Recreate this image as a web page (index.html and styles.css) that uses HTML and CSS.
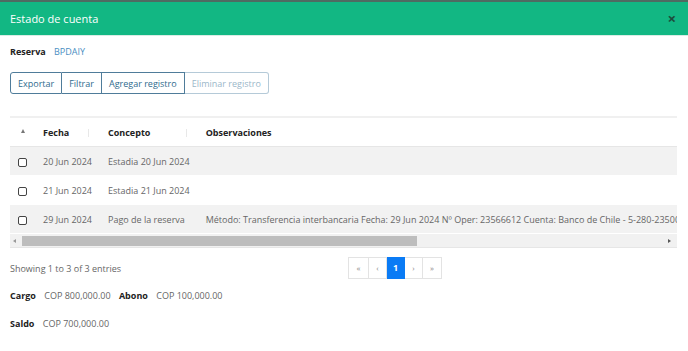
FILE: index.html
```html
<!DOCTYPE html>
<html lang="es">
<head>
    <meta charset="UTF-8">
    <meta name="viewport" content="width=device-width, initial-scale=1.0">
    <title>Estado de cuenta</title>
    <link rel="stylesheet" href="styles.css">
</head>
<body>
<div class="modal">
    <header class="modal-head">
        <h1>Estado de cuenta</h1>
        <span class="close">&times;</span>
    </header>

    <div class="modal-body">
        <p class="reserva"><b>Reserva</b> <a href="#">BPDAIY</a></p>

        <div class="btns">
            <button>Exportar</button>
            <button>Filtrar</button>
            <button>Agregar registro</button>
            <button class="off">Eliminar registro</button>
        </div>

        <div class="grid">
            <div class="grid-in">
                <table>
                    <thead>
                        <tr>
                            <th class="c-chk"><span class="up"></span></th>
                            <th class="c-fecha">Fecha <span class="sort"></span></th>
                            <th class="c-con">Concepto <span class="sort"></span></th>
                            <th>Observaciones</th>
                        </tr>
                    </thead>
                    <tbody>
                        <tr class="odd">
                            <td class="c-chk"><i class="chk"></i></td>
                            <td>20 Jun 2024</td>
                            <td>Estadia 20 Jun 2024</td>
                            <td></td>
                        </tr>
                        <tr>
                            <td class="c-chk"><i class="chk"></i></td>
                            <td>21 Jun 2024</td>
                            <td>Estadia 21 Jun 2024</td>
                            <td></td>
                        </tr>
                        <tr class="odd">
                            <td class="c-chk"><i class="chk"></i></td>
                            <td>29 Jun 2024</td>
                            <td>Pago de la reserva</td>
                            <td>Método: Transferencia interbancaria Fecha: 29 Jun 2024 Nº Oper: 23566612 Cuenta: Banco de Chile - 5-280-23500-08</td>
                        </tr>
                    </tbody>
                </table>
            </div>
            <div class="scroll">
                <span class="arr l"></span>
                <span class="thumb"></span>
                <span class="arr r"></span>
            </div>
        </div>

        <div class="info">
            <span class="count">Showing 1 to 3 of 3 entries</span>
            <ul class="pager">
                <li>&laquo;</li>
                <li>&lsaquo;</li>
                <li class="on">1</li>
                <li>&rsaquo;</li>
                <li>&raquo;</li>
            </ul>
        </div>

        <p class="tot"><b>Cargo</b> <span>COP 800,000.00</span> <b>Abono</b> <span>COP 100,000.00</span></p>
        <p class="tot"><b>Saldo</b> <span>COP 700,000.00</span></p>
    </div>
</div>
</body>
</html>
```

FILE: styles.css
```css
body {margin: 0; font-family: "Open Sans", "Noto Sans", sans-serif; font-size: 9px; color: #666; background: #fff;}
.modal {border-top: 2px solid #4f6b62;}

.modal-head {display: flex; align-items: center; justify-content: space-between; height: 33px; padding: 0 10px; background: #12b783; border-bottom: 1px solid #d9ece5;}
.modal-head h1 {margin: 0; font-size: 11px; font-weight: normal; color: #fff;}
.close {font-size: 15px; font-weight: bold; color: #1d4d3d; line-height: 1; padding-right: 2px;}

.modal-body {padding: 0 11px 0 10px;}
.reserva {margin: 10px 0 0; line-height: 12px; font-size: 9px;}
.reserva b {color: #222; margin-right: 6px;}
.reserva a {color: #4a8ec2; text-decoration: none;}

.btns {display: flex; margin-top: 14px;}
.btns button {height: 22px; padding: 0 7px; font: inherit; font-size: 9px; color: #2f6b8e; background: #fff; border: 1px solid #4f7c9a; border-left: 0;}
.btns button:first-child {border-left: 1px solid #4f7c9a; border-radius: 3px 0 0 3px;}
.btns button:last-child {border-radius: 0 3px 3px 0;}
.btns button.off {color: #9bb7c9; border-color: #b5cad8;}
.btns button:nth-child(3) {border-right-color: #4f7c9a;}

.grid {margin-top: 22px; border-top: 2px solid #f0f0f0;}
.grid-in {overflow: hidden;}
table {border-collapse: collapse; white-space: nowrap;}
th, td {height: 28px; padding: 0 8px; text-align: left;}
th {color: #222; font-weight: bold; border-bottom: 1px solid #e6e6e6;}
td {color: #666;}
tr.odd td {background: #f2f2f2;}
tbody tr td {border-bottom: 1px solid #fff;}

.c-chk {width: 8px; text-align: center;}
.c-fecha {width: 49px;}
.c-con {width: 82px;}
th .sort {display: inline-block; width: 3px; height: 8px; margin-left: 12px; vertical-align: middle; background: linear-gradient(#e8e8e8, #e8e8e8) center/1px 100% no-repeat;}
.c-fecha .sort {margin-left: 15px;}
.c-con .sort {margin-left: 32px;}
.up {display: inline-block; width: 0; height: 0; border: 2.5px solid transparent; border-bottom: 4px solid #777; border-top: 0; vertical-align: 3px;}
.chk {display: inline-block; width: 7px; height: 7px; border: 1px solid #444; border-radius: 2px; vertical-align: middle; background: #fff;}

.scroll {display: flex; align-items: center; height: 13px; background: #f1f1f1; border-bottom: 1px solid #e6e6e6;}
.thumb {width: 395px; height: 10px; margin-left: 6px; background: #bdbdbd;}
.arr {width: 0; height: 0; border: 2.5px solid transparent;}
.arr.l {border-right: 3px solid #999; border-left: 0; margin-left: 3px;}
.arr.r {border-left: 3px solid #555; border-right: 0; margin-left: auto; margin-right: 6px;}

.info {display: flex; align-items: center; margin-top: 9px;}
.count {width: 338px; color: #666;}
.pager {display: flex; margin: 0; padding: 0; list-style: none;}
.pager li {width: 17px; height: 20px; line-height: 20px; text-align: center; border: 1px solid #e3e3e3; border-left: 0; color: #888; font-size: 8px;}
.pager li:first-child {border-left: 1px solid #e3e3e3; width: 19px;}
.pager li:last-child {width: 18px;}
.pager li.on {background: #0a7bf5; border-color: #0a7bf5; color: #fff; font-weight: bold; font-size: 9px;}

.tot {margin: 11px 0 0; line-height: 12px;}
.tot + .tot {margin-top: 16px;}
.tot b {color: #222; margin-right: 6px;}
.tot span {margin-right: 6px;}
```
